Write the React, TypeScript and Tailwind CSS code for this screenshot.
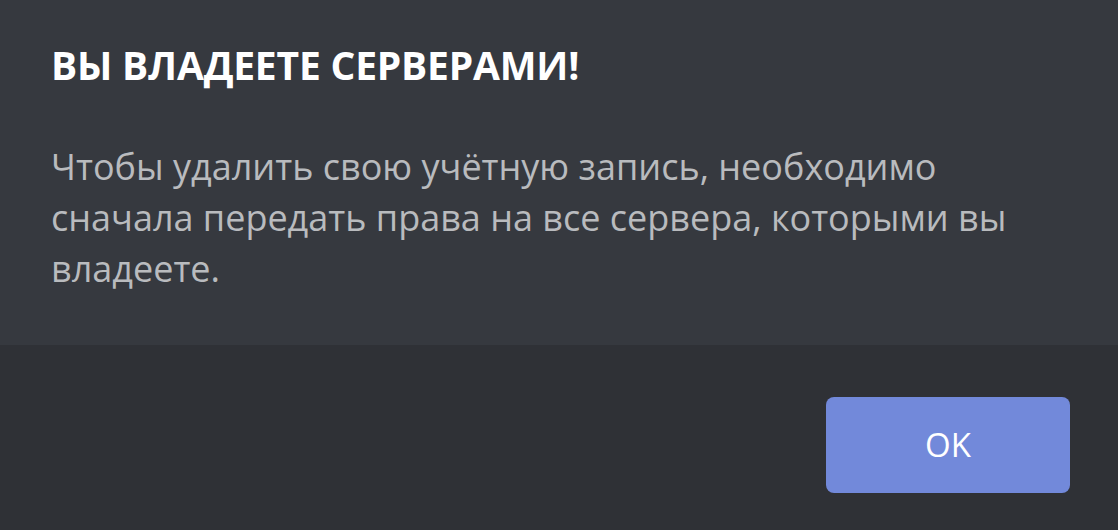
export default function App() {
  return (
    <div
      className="w-[1118px] h-[530px] flex flex-col overflow-hidden select-none"
      style={{ fontFamily: "'Open Sans', 'Noto Sans', sans-serif" }}
    >
      <div className="h-[345px] shrink-0 bg-[#36393f] pl-[51px] pr-12 pt-[41px]">
        <h1 className="text-[39px] leading-[48px] font-bold uppercase text-white tracking-[-0.2px]">
          Вы владеете серверами!
        </h1>
        <p className="mt-[52px] w-[980px] text-[36px] leading-[51px] text-[#b9bbbe]">
          Чтобы удалить свою учётную запись, необходимо сначала передать права на все сервера, которыми вы владеете.
        </p>
      </div>
      <div className="flex-1 bg-[#2f3136] flex justify-end items-start pt-[52px] pr-[48px]">
        <button className="w-[244px] h-[96px] rounded-lg bg-[#7289da] text-white text-[33px] font-medium">
          OK
        </button>
      </div>
    </div>
  );
}
